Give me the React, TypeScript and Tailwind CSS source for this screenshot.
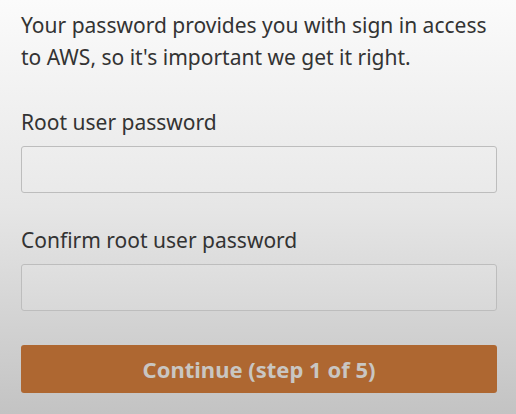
import React from 'react';

function Field({ label }: { label: string }) {
  return (
    <div>
      <label className="block text-[21px] leading-[28px] text-[#333333]">{label}</label>
      <div className="mt-[10px] h-[47px] w-full rounded-[3px] border border-[#bdbdbd] bg-white/10" />
    </div>
  );
}

export default function App() {
  return (
    <div
      className="h-[414px] w-[516px] overflow-hidden bg-gradient-to-b from-[#fbfbfb] via-[#e6e6e6] to-[#c3c3c3] pl-[21px] pr-[19px] pt-[9px]"
      style={{ fontFamily: '"Noto Sans", "Open Sans", sans-serif' }}
    >
      <p className="text-[21px] leading-[32px] text-[#333333]">
        Your password provides you with sign in access to AWS, so it's important we get it right.
      </p>
      <div className="mt-[35px] flex flex-col gap-[33px]">
        <Field label="Root user password" />
        <Field label="Confirm root user password" />
      </div>
      <button className="mt-[34px] flex h-[48px] w-full items-center justify-center rounded-[3px] bg-[#ae6731] text-[22px] font-bold text-[#c9c6c2]">
        Continue (step 1 of 5)
      </button>
    </div>
  );
}
